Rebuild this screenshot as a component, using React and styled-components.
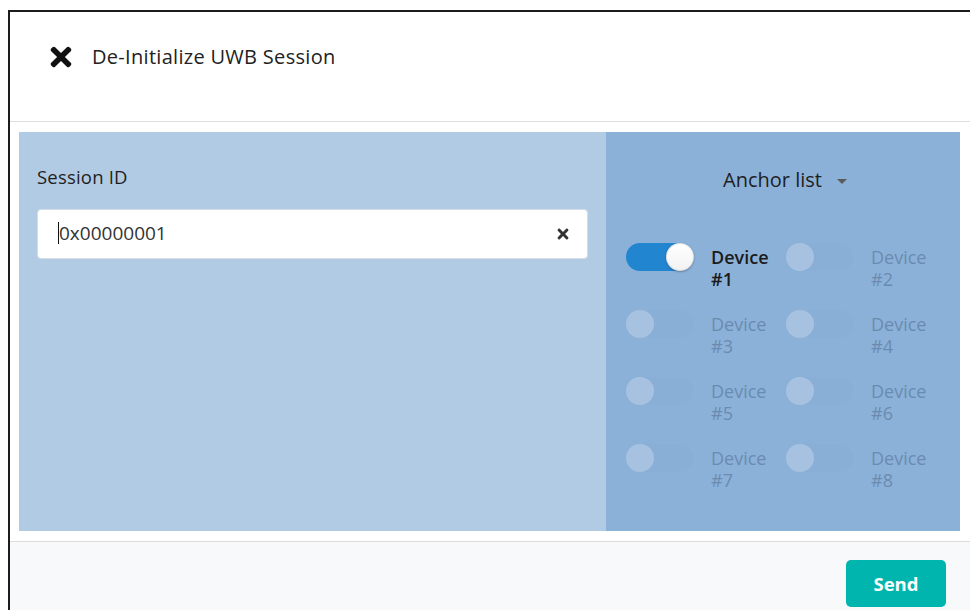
import React from "react";
import styled, { createGlobalStyle } from "styled-components";
import { FaTimes } from "react-icons/fa";

const GlobalStyle = createGlobalStyle`
  html, body { margin: 0; padding: 0; background: #ffffff; }
  body { font-family: "Open Sans", "Lato", sans-serif; color: rgba(0,0,0,0.87); overflow: hidden; }
  * { box-sizing: border-box; }
`;

const Page = styled.div`
  padding: 10px 0 0 8px;
  height: 610px;
`;

const Modal = styled.div`
  width: 962px;
  height: 600px;
  border-top: 2px solid #1c1c1c;
  border-left: 2px solid #1c1c1c;
  background: #ffffff;
  display: flex;
  flex-direction: column;
`;

const Header = styled.div`
  height: 110px;
  flex: none;
  display: flex;
  align-items: center;
  gap: 16px;
  padding: 0 0 20px 36px;
  border-bottom: 1px solid #dfdfdf;
  font-size: 20px;
  font-weight: 500;
  letter-spacing: 0.3px;
  color: #222;
`;

const HeaderIcon = styled(FaTimes)`
  width: 30px;
  height: 30px;
  color: #111;
`;

const Content = styled.div`
  padding: 10px 10px 10px 9px;
  flex: none;
`;

const Body = styled.div`
  display: grid;
  grid-template-columns: 587px 354px;
  height: 399px;
`;

const LeftPanel = styled.div`
  background: #b2cbe4;
  padding: 33px 18px 0 18px;
`;

const FieldLabel = styled.div`
  font-size: 18.5px;
  font-weight: 500;
  letter-spacing: 0.2px;
  line-height: 24px;
  color: #1e1e1e;
  margin-bottom: 20px;
`;

const InputBox = styled.div`
  height: 50px;
  background: #ffffff;
  border-radius: 4px;
  border: 1px solid #d4dde6;
  display: flex;
  align-items: center;
  padding: 0 16px 0 20px;
  font-size: 19px;
  color: #333;
`;

const InputText = styled.span`
  flex: 1;
  border-left: 1.5px solid #111;
  line-height: 22px;
  margin-top: -2px;
`;

const ClearIcon = styled(FaTimes)`
  width: 16px;
  height: 16px;
  color: #333;
`;

const RightPanel = styled.div`
  background: #8cb1d8;
  padding: 34px 0 0 20px;
`;

const Dropdown = styled.div`
  display: flex;
  justify-content: center;
  align-items: center;
  gap: 15px;
  margin-left: -16px;
  font-size: 20px;
  font-weight: 500;
  color: #1e1e1e;
  line-height: 28px;
`;

const Caret = styled.span`
  width: 0;
  height: 0;
  border-left: 5px solid transparent;
  border-right: 5px solid transparent;
  border-top: 5px solid #5a5a5a;
  margin-top: 2px;
`;

const DeviceGrid = styled.div`
  margin-top: 49px;
  display: grid;
  grid-template-columns: 160px 160px;
  grid-auto-rows: 67px;
`;

const Device = styled.label`
  display: flex;
  align-items: flex-start;
  gap: 17px;
`;

const Track = styled.span`
  position: relative;
  flex: none;
  width: 68px;
  height: 28px;
  border-radius: 14px;
  background: ${(p) => (p.$on ? "#2185d0" : "rgba(0,0,0,0.008)")};
`;

const Knob = styled.span`
  position: absolute;
  top: 0;
  left: ${(p) => (p.$on ? "40px" : "0")};
  width: 28px;
  height: 28px;
  border-radius: 50%;
  background: ${(p) => (p.$on ? "linear-gradient(#ffffff, #f2f2f2)" : "rgba(255,255,255,0.24)")};
  box-shadow: ${(p) => (p.$on ? "0 1px 2px rgba(34,36,38,0.35), inset 0 0 0 1px rgba(34,36,38,0.12)" : "none")};
`;

const DeviceName = styled.span`
  font-size: 18px;
  line-height: 22px;
  margin-top: 3px;
  font-weight: ${(p) => (p.$on ? 600 : 400)};
  color: ${(p) => (p.$on ? "#1a1a1a" : "#6a8bb0")};
`;

const Footer = styled.div`
  flex: 1;
  border-top: 1px solid #dcdcdc;
  background: #f8f9fb;
  display: flex;
  justify-content: flex-end;
  align-items: flex-start;
  padding: 18px 24px 0 0;
`;

const SendButton = styled.button`
  width: 100px;
  height: 47px;
  border: none;
  border-radius: 5px;
  background: #00b5ad;
  color: #ffffff;
  font-family: "Open Sans", sans-serif;
  font-size: 18.5px;
  font-weight: 700;
  cursor: pointer;
`;

const devices = [1, 2, 3, 4, 5, 6, 7, 8];

export default function App() {
  return (
    <>
      <GlobalStyle />
      <Page>
        <Modal>
          <Header>
            <HeaderIcon />
            <span>De-Initialize UWB Session</span>
          </Header>
          <Content>
            <Body>
              <LeftPanel>
                <FieldLabel>Session ID</FieldLabel>
                <InputBox>
                  <InputText>0x00000001</InputText>
                  <ClearIcon />
                </InputBox>
              </LeftPanel>
              <RightPanel>
                <Dropdown>
                  <span>Anchor list</span>
                  <Caret />
                </Dropdown>
                <DeviceGrid>
                  {devices.map((n) => {
                    const on = n === 1;
                    return (
                      <Device key={n}>
                        <Track $on={on}>
                          <Knob $on={on} />
                        </Track>
                        <DeviceName $on={on}>
                          Device
                          <br />#{n}
                        </DeviceName>
                      </Device>
                    );
                  })}
                </DeviceGrid>
              </RightPanel>
            </Body>
          </Content>
          <Footer>
            <SendButton>Send</SendButton>
          </Footer>
        </Modal>
      </Page>
    </>
  );
}
